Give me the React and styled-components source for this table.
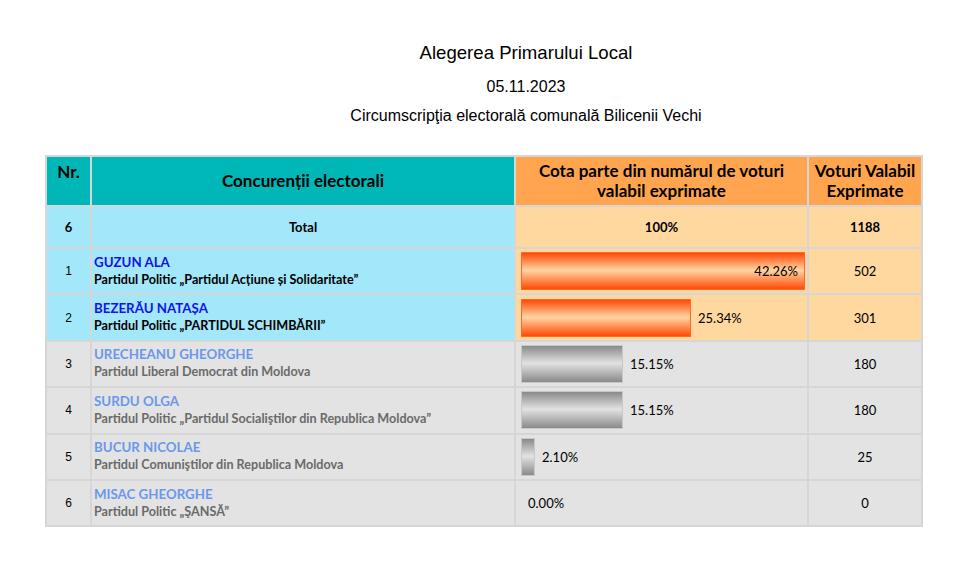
import React from "react";
import styled, { createGlobalStyle } from "styled-components";

const GlobalStyle = createGlobalStyle`
  body {
    margin: 0;
    background: #ffffff;
    font-family: "Lato", "Noto Sans", sans-serif;
  }
`;

const Page = styled.div`
  width: 974px;
  padding-top: 40px;
`;

const Heading = styled.header`
  width: 600px;
  margin-left: 226px;
  text-align: center;
  font-family: "Liberation Sans", Arial, sans-serif;
  color: #000;
`;

const Title = styled.h1`
  margin: 0;
  font-size: 18.6px;
  font-weight: normal;
  line-height: 25px;
`;

const SubLine = styled.div`
  font-size: 16px;
  line-height: 19px;
  margin-top: ${(p) => p.$gap}px;
`;

const Table = styled.table`
  margin: 30px 0 0 45px;
  width: 878px;
  border-collapse: separate;
  border-spacing: 2px;
  background: #d6d6d6;
  table-layout: fixed;
`;

const HeadRow = styled.tr`
  height: 48px;
`;

const HeadCell = styled.th`
  background: ${(p) => (p.$tone === "orange" ? "#ffa54f" : "#00b7b7")};
  color: #000;
  font-size: 17px;
  font-weight: bold;
  line-height: 20px;
  padding: ${(p) => (p.$top ? "5px 0 0" : "0")};
  vertical-align: ${(p) => (p.$top ? "top" : "middle")};
  text-align: center;
`;

const Row = styled.tr`
  height: ${(p) => (p.$total ? 40 : 44.4)}px;
`;

const Cell = styled.td`
  background: ${(p) =>
    p.$tone === "blue" ? "#a2e7fa" : p.$tone === "orange" ? "#ffd8a0" : "#e3e3e3"};
  font-size: 13px;
  font-weight: ${(p) => (p.$bold ? "bold" : "normal")};
  text-align: ${(p) => p.$align || "center"};
  padding: ${(p) => (p.$align === "left" ? "0 2px" : "0")};
  color: #000;
`;

const NrCell = styled(Cell)`
  font-family: ${(p) => (p.$bold ? '"Lato", sans-serif' : '"Liberation Sans", Arial, sans-serif')};
  font-size: ${(p) => (p.$bold ? 13 : 12)}px;
`;

const ShareCell = styled(Cell)`
  padding: 0;
`;

const Name = styled.div`
  font-weight: bold;
  font-size: 13.3px;
  line-height: 17px;
  color: ${(p) => (p.$muted ? "#6b97ec" : "#1414e6")};
`;

const Party = styled.div`
  font-weight: bold;
  font-size: 12.6px;
  line-height: 18px;
  color: ${(p) => (p.$muted ? "#6a6a6a" : "#000")};
`;

const BarWrap = styled.div`
  display: flex;
  align-items: center;
  padding-left: 5px;
  gap: 7px;
  font-size: 13px;
`;

const Bar = styled.div`
  height: 38px;
  box-sizing: border-box;
  display: flex;
  align-items: center;
  justify-content: flex-end;
  padding-right: ${(p) => (p.$empty ? 0 : 6)}px;
  border: ${(p) => (p.$empty ? "none" : `1px solid ${p.$hot ? "#ff6a2a" : "#c8c8c8"}`)};
  background: ${(p) =>
    p.$empty
      ? "none"
      : p.$hot
      ? "linear-gradient(#ff4a05, #ffd4a4 48%, #ff4a05)"
      : "linear-gradient(#8a8a8a, #e2e2e2 48%, #8a8a8a)"};
`;

const rows = [
  { nr: 1, name: "GUZUN ALA", party: "Partidul Politic „Partidul Acțiune și Solidaritate”", pct: 42.26, votes: 502, lead: true },
  { nr: 2, name: "BEZERĂU NATAȘA", party: "Partidul Politic „PARTIDUL SCHIMBĂRII”", pct: 25.34, votes: 301, lead: true },
  { nr: 3, name: "URECHEANU GHEORGHE", party: "Partidul Liberal Democrat din Moldova", pct: 15.15, votes: 180 },
  { nr: 4, name: "SURDU OLGA", party: "Partidul Politic „Partidul Socialiştilor din Republica Moldova”", pct: 15.15, votes: 180 },
  { nr: 5, name: "BUCUR NICOLAE", party: "Partidul Comuniştilor din Republica Moldova", pct: 2.1, votes: 25 },
  { nr: 6, name: "MISAC GHEORGHE", party: "Partidul Politic „ŞANSĂ”", pct: 0, votes: 0 },
];

const maxPct = 42.26;
const fullWidth = 284;

const Share = ({ pct, hot }) => {
  const label = `${pct.toFixed(2)}%`;
  const width = Math.round((pct / maxPct) * fullWidth);
  if (pct === maxPct)
    return (
      <BarWrap>
        <Bar $hot={hot} style={{ width }}>{label}</Bar>
      </BarWrap>
    );
  return (
    <BarWrap>
      <Bar $hot={hot} $empty={pct === 0} style={{ width }} />
      {label}
    </BarWrap>
  );
};

export default function App() {
  return (
    <Page>
      <GlobalStyle />
      <Heading>
        <Title>Alegerea Primarului Local</Title>
        <SubLine $gap={12}>05.11.2023</SubLine>
        <SubLine $gap={10}>Circumscripţia electorală comunală Bilicenii Vechi</SubLine>
      </Heading>
      <Table>
        <colgroup>
          <col style={{ width: 43 }} />
          <col style={{ width: 422 }} />
          <col style={{ width: 291 }} />
          <col />
        </colgroup>
        <thead>
          <HeadRow>
            <HeadCell $top>Nr.</HeadCell>
            <HeadCell>Concurenții electorali</HeadCell>
            <HeadCell $tone="orange">
              Cota parte din numărul de voturi
              <br />
              valabil exprimate
            </HeadCell>
            <HeadCell $tone="orange">
              Voturi Valabil
              <br />
              Exprimate
            </HeadCell>
          </HeadRow>
        </thead>
        <tbody>
          <Row $total>
            <NrCell $tone="blue" $bold>6</NrCell>
            <Cell $tone="blue" $bold>Total</Cell>
            <Cell $tone="orange" $bold>100%</Cell>
            <Cell $tone="orange" $bold>1188</Cell>
          </Row>
          {rows.map((r) => {
            const tone = r.lead ? "blue" : "gray";
            const side = r.lead ? "orange" : "gray";
            return (
              <Row key={r.nr}>
                <NrCell $tone={tone}>{r.nr}</NrCell>
                <Cell $tone={tone} $align="left">
                  <Name $muted={!r.lead}>{r.name}</Name>
                  <Party $muted={!r.lead}>{r.party}</Party>
                </Cell>
                <ShareCell $tone={side}>
                  <Share pct={r.pct} hot={r.lead} />
                </ShareCell>
                <Cell $tone={side}>{r.votes}</Cell>
              </Row>
            );
          })}
        </tbody>
      </Table>
    </Page>
  );
}
